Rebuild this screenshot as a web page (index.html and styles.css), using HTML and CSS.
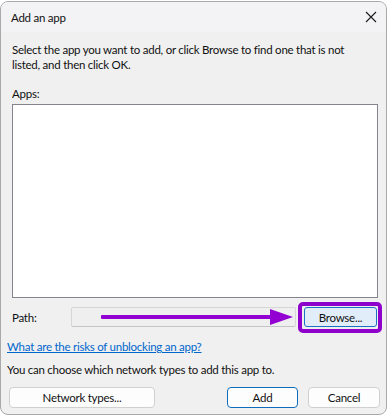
FILE: index.html
```html
<!DOCTYPE html>
<html>
<head>
<meta charset="utf-8">
<link rel="stylesheet" href="styles.css">
</head>
<body>
<div class="window">
  <div class="titlebar">
    <span class="title">Add an app</span>
    <svg class="close" width="12" height="12" viewBox="0 0 12 12"><path d="M1 1 L11 11 M11 1 L1 11" stroke="#1b1b1b" stroke-width="1.1" fill="none"/></svg>
  </div>
  <div class="content">
    <p class="desc">Select the app you want to add, or click Browse to find one that is not listed, and then click OK.</p>
    <div class="label">Apps:</div>
    <div class="listbox"></div>
    <div class="pathrow">
      <span class="pathlabel">Path:</span>
      <div class="pathfield"></div>
      <div class="browse-wrap">
        <button class="btn browse">Browse...</button>
        <div class="highlight"></div>
      </div>
      <svg class="arrow" width="200" height="18" viewBox="0 0 200 18"><rect x="0" y="7" width="172" height="4" rx="1" fill="#9200d2"/><path d="M169 1 L192 9 L169 17 Z" fill="#9200d2"/></svg>
    </div>
    <a class="link" href="#">What are the risks of unblocking an app?</a>
    <p class="info">You can choose which network types to add this app to.</p>
    <div class="buttons">
      <button class="btn net">Network types...</button>
      <div class="spacer"></div>
      <button class="btn add">Add</button>
      <button class="btn cancel">Cancel</button>
    </div>
  </div>
</div>
</body>
</html>
```
FILE: styles.css
```css
html, body {
  margin: 0;
  padding: 0;
  background: #ffffff;
}
body {
  font-family: "Lato", "Segoe UI", sans-serif;
  font-size: 11.5px;
  letter-spacing: -0.25px;
  color: #111111;
}
.window {
  margin-top: 1px;
  width: 385px;
  height: 412px;
  border: 1px solid #a9a9a9;
  border-radius: 8px;
  background: #f0f0f0;
  overflow: hidden;
  display: flex;
  flex-direction: column;
}
.titlebar {
  height: 30px;
  background: #f3f2f4;
  display: flex;
  align-items: center;
  padding-left: 10px;
  padding-right: 9px;
  flex: none;
}
.title {
  flex: 1;
  line-height: 15px;
}
.close {
  display: block;
}
.content {
  padding: 0 8px 0 11px;
  position: relative;
}
.desc {
  margin: 10px 0 0 0;
  line-height: 15px;
  width: 350px;
}
.label {
  margin-top: 14px;
  line-height: 15px;
}
.listbox {
  margin-top: 3px;
  height: 192px;
  border: 1px solid #82868c;
  background: #ffffff;
}
.pathrow {
  margin-top: 9px;
  height: 20px;
  display: flex;
  align-items: center;
  position: relative;
}
.pathlabel {
  width: 59px;
  flex: none;
  line-height: 15px;
}
.pathfield {
  width: 223px;
  height: 18px;
  border: 1px solid #d6d6d6;
  border-bottom-color: #c4c4c4;
  border-radius: 2px;
  background: #efefef;
  flex: none;
}
.browse-wrap {
  margin-left: 8px;
  position: relative;
}
.btn {
  font-family: inherit;
  font-size: 11.5px;
  letter-spacing: -0.25px;
  color: #111111;
  height: 21px;
  border: 1px solid #d0d0d0;
  border-radius: 4px;
  background: #fdfdfd;
  padding: 0;
  line-height: 17px;
  display: block;
}
.browse {
  width: 73px;
  height: 20px;
  background: #e1eefa;
  border-color: #1a72c4;
  border-radius: 3px;
}
.highlight {
  position: absolute;
  left: -6px;
  top: -5px;
  width: 76px;
  height: 23px;
  border: 4px solid #8e00cc;
  border-radius: 5px;
}
.arrow {
  position: absolute;
  left: 89px;
  top: 1px;
}
.link {
  display: block;
  margin: 12px 0 0 -5px;
  line-height: 15px;
  color: #0066cc;
  text-decoration: underline;
  width: max-content;
}
.info {
  margin: 8px 0 0 -5px;
  line-height: 15px;
}
.buttons {
  margin: 10px -2px 0 -3px;
  display: flex;
}
.spacer {
  flex: 1;
}
.net {
  width: 146px;
}
.add {
  width: 71px;
  border: 1px solid #0f6cbd;
}
.cancel {
  width: 72px;
  margin-left: 10px;
}
```
